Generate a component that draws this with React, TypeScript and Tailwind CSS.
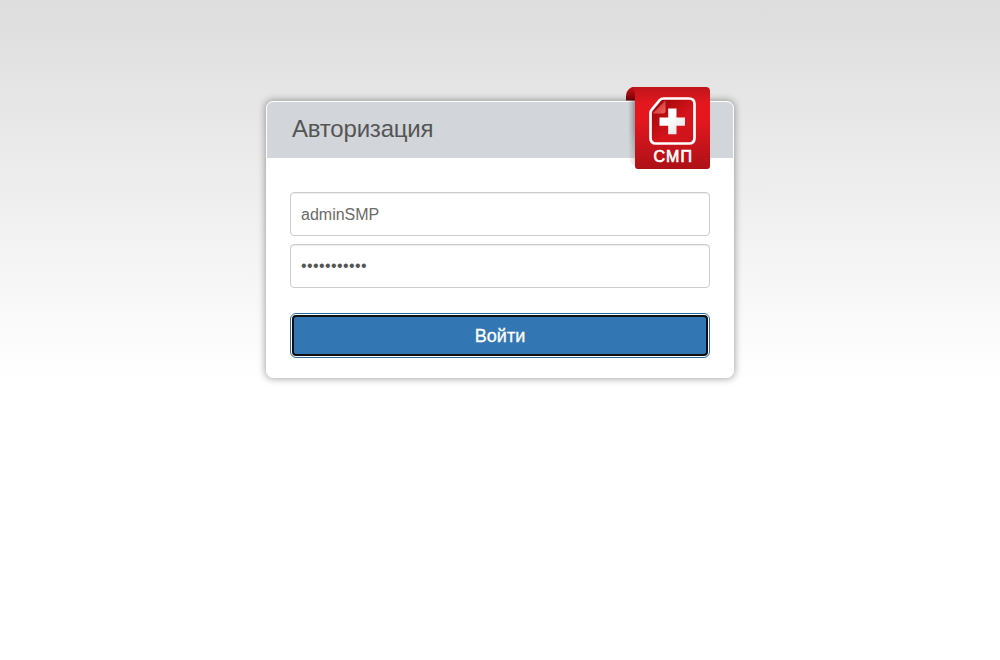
import React from "react";

function Badge() {
  return (
    <svg
      className="absolute -top-[16px] left-[358px] h-[84px] w-[86px]"
      viewBox="0 0 86 84"
      fill="none"
      role="img"
      aria-label="СМП"
    >
      <defs>
        <linearGradient id="ribbon" x1="0" y1="0" x2="0" y2="1">
          <stop offset="0" stopColor="#bf151b" />
          <stop offset="0.1" stopColor="#d0171d" />
          <stop offset="0.2" stopColor="#e4171f" />
          <stop offset="0.4" stopColor="#e4171f" />
          <stop offset="1" stopColor="#ad1117" />
        </linearGradient>
        <linearGradient id="curl" x1="0" y1="0" x2="0" y2="1">
          <stop offset="0" stopColor="#bd141a" />
          <stop offset="0.6" stopColor="#98080d" />
          <stop offset="1" stopColor="#650307" />
        </linearGradient>
        <linearGradient id="page" x1="0" y1="0" x2="1" y2="1">
          <stop offset="0.1" stopColor="#9c070c" />
          <stop offset="0.6" stopColor="#d8131b" />
          <stop offset="1" stopColor="#ca141b" />
        </linearGradient>
        <linearGradient id="fold" x1="0" y1="0" x2="1" y2="1">
          <stop offset="0" stopColor="#c52026" />
          <stop offset="1" stopColor="#f0645f" />
        </linearGradient>
        <linearGradient id="cross" x1="0" y1="0" x2="1" y2="1">
          <stop offset="0.4" stopColor="#fff" />
          <stop offset="1" stopColor="#dedede" />
        </linearGradient>
        <linearGradient id="shade" x1="0" y1="0" x2="1" y2="0">
          <stop offset="0" stopColor="#777" stopOpacity="0" />
          <stop offset="1" stopColor="#555" stopOpacity="0.6" />
        </linearGradient>
        <linearGradient id="fade" x1="0" y1="0" x2="0" y2="1">
          <stop offset="0.5" stopColor="#fff" />
          <stop offset="1" stopColor="#333" />
        </linearGradient>
        <mask id="shadeMask">
          <rect width="86" height="84" fill="url(#fade)" />
        </mask>
      </defs>
      <path d="M3 14h8v65c-4 0-6-2-7-6Z" fill="url(#shade)" mask="url(#shadeMask)" />
      <path d="M1 14.5V10.500C1 5 4.500 1 9.500 1H15v13.5Z" fill="url(#curl)" />
      <path d="M6 1h75c2.500 0 4 1.500 4 4v75c0 2-1 3-3 3H13c-2 0-3-1-3-3V11C10 5.500 9 2.500 6 1Z" fill="url(#ribbon)" />
      <path
        d="M38.500 12.500H64c3.500 0 5.500 2 5.500 5.500v34c0 3.500-2 5.500-5.500 5.500H31c-3.500 0-5.500-2-5.500-5.500V26.500c0-1.500.5-2 1.500-3.200l7.500-9c1.300-1.300 2-1.800 4-1.800Z"
        fill="url(#page)"
        stroke="#fff"
        strokeWidth="2.700"
      />
      <path d="M27.500 27.500h10c2.200 0 3-.8 3-3v-10Z" fill="url(#fold)" />
      <path d="M43.200 22.500h8.300v9h8.500v8.300h-8.500v8.500h-8.300v-8.500h-8.700v-8.300h8.700Z" fill="url(#cross)" />
      <text
        x="28.500"
        y="75.500"
        fill="#fff"
        stroke="#fff"
        strokeWidth=".7"
        textLength="38.500"
        fontSize="16"
        fontFamily="Liberation Sans, Arial, sans-serif"
      >
        СМП
      </text>
    </svg>
  );
}

const inputClass =
  "h-11 w-full rounded-[4px] border border-[#ccc] bg-white px-[10px] text-[16px] shadow-[inset_0_1px_1px_rgba(0,0,0,0.075)] outline-none";

export default function App() {
  return (
    <main className="h-[660px] overflow-hidden bg-[linear-gradient(to_bottom,#dddddd_0px,#ffffff_380px)] pt-[101px] font-['Liberation_Sans',Arial,sans-serif]">
      <section className="relative mx-auto h-[277px] w-[468px] rounded-[7px] border border-white bg-white shadow-[0_0_7px_1px_rgba(0,0,0,0.34)]">
        <header className="flex h-14 items-center rounded-t-[6px] bg-[#d2d5da] pb-[2px] pl-[25px]">
          <h1 className="text-[24px] leading-[26px] tracking-[-0.2px] text-[#555]">Авторизация</h1>
        </header>
        <Badge />
        <form className="flex flex-col px-[23px] pt-[34px]" onSubmit={(e) => e.preventDefault()}>
          <input
            className={`${inputClass} pt-[2px] text-[#6a6a6a]`}
            type="text"
            defaultValue="adminSMP"
            aria-label="Логин"
          />
          <input
            className={`${inputClass} mt-2 tracking-[0.4px] text-[#555]`}
            type="password"
            defaultValue="adminSMP123"
            aria-label="Пароль"
          />
          <button
            type="submit"
            className="mt-[25px] h-[45px] rounded-[6px] border border-[#2e6da4] bg-white p-px text-[18px] text-white"
          >
            <span className="flex h-full items-center justify-center rounded-[4px] border-2 border-[#101010] bg-[#3277b3] pt-[2px] [-webkit-text-stroke:0.3px_white]">
              Войти
            </span>
          </button>
        </form>
      </section>
    </main>
  );
}
